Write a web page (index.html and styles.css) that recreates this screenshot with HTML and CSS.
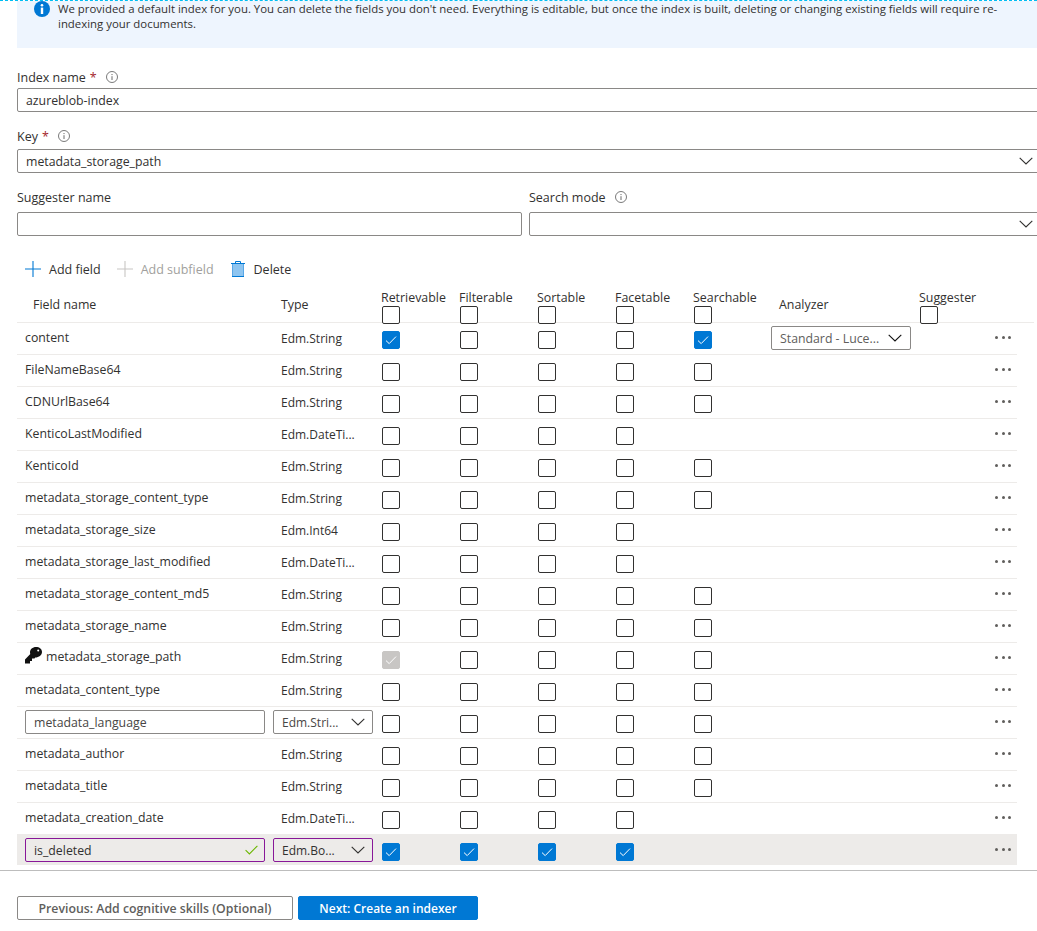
FILE: index.html
```html
<!DOCTYPE html>
<html lang="en">
<head>
<meta charset="utf-8">
<title>Customize target index</title>
<link rel="stylesheet" href="styles.css">
</head>
<body>
<svg class="defs" width="0" height="0" aria-hidden="true">
  <symbol id="chk" viewBox="0 0 18 18"><path d="M4 9.6 7.2 12.6 14 5.6" fill="none" stroke="currentColor" stroke-width="1"/></symbol>
  <symbol id="chev" viewBox="0 0 14 8"><path d="M.7.8 7 7 13.3.8" fill="none" stroke="currentColor" stroke-width="1.1"/></symbol>
  <symbol id="tip" viewBox="0 0 12 12"><circle cx="6" cy="6" r="5.5" fill="none" stroke="#6b6b6b" stroke-width=".9"/><path d="M6 5.2V9M6 3v1.1" stroke="#6b6b6b" stroke-width="1" fill="none"/></symbol>
  <symbol id="plus" viewBox="0 0 16 16"><path d="M8 0v16M0 8h16" stroke="currentColor" stroke-width="1.1" fill="none"/></symbol>
</svg>
<div class="page">
  <div class="notice">
    <svg class="notice-icon" viewBox="0 0 16 16"><circle cx="8" cy="8" r="8" fill="#0078d4"/><circle cx="8" cy="4.2" r="1.3" fill="#fff"/><path d="M6.8 6.6h2.4V13H6.8z" fill="#fff"/></svg>
    <p>We provided a default index for you. You can delete the fields you don't need. Everything is editable, but once the index is built, deleting or changing existing fields will require re-indexing your documents.</p>
  </div>

  <div class="form">
    <label class="lbl lbl-index">Index name <b>*</b><svg class="tip"><use href="#tip"/></svg></label>
    <div class="field">azureblob-index</div>
    <label class="lbl lbl-key">Key <b>*</b><svg class="tip"><use href="#tip"/></svg></label>
    <div class="field">metadata_storage_path<svg class="chev"><use href="#chev"/></svg></div>
    <div class="pair">
      <div class="pair-a">
        <label class="lbl">Suggester name</label>
        <div class="field"></div>
      </div>
      <div class="pair-b">
        <label class="lbl">Search mode<svg class="tip"><use href="#tip"/></svg></label>
        <div class="field"><svg class="chev"><use href="#chev"/></svg></div>
      </div>
    </div>
  </div>

  <div class="toolbar">
    <span class="tool"><svg class="plus blue"><use href="#plus"/></svg>Add field</span>
    <span class="tool off"><svg class="plus"><use href="#plus"/></svg>Add subfield</span>
    <span class="tool"><svg class="trash" viewBox="0 0 14 16"><path d="M2 3h10v12H2z" fill="#8ec5f0"/><path d="M1.5 3v12.5M12.5 3v12.5" fill="none" stroke="#5aa7e6" stroke-width="1"/><path d="M1 15.5h12M0 2.5h14M4.5 2.5V.5h5v2" fill="none" stroke="#0078d4" stroke-width="1"/></svg>Delete</span>
  </div>

  <div class="grid">
    <div class="head">
      <div class="h-name">Field name</div>
      <div class="h-type">Type</div>
      <div class="h-cb">Retrievable<span class="cb"></span></div>
      <div class="h-cb">Filterable<span class="cb"></span></div>
      <div class="h-cb">Sortable<span class="cb"></span></div>
      <div class="h-cb">Facetable<span class="cb"></span></div>
      <div class="h-cb">Searchable<span class="cb"></span></div>
      <div class="h-an">Analyzer</div>
      <div class="h-cb">Suggester<span class="cb"></span></div>
    </div>

    <div class="row">
      <div class="name">content</div><div class="type">Edm.String</div>
      <span class="cb on"><svg><use href="#chk"/></svg></span><span class="cb"></span><span class="cb"></span><span class="cb"></span><span class="cb on"><svg><use href="#chk"/></svg></span>
      <div class="analyzer"><span>Standard - Luce...</span><svg class="chev dark"><use href="#chev"/></svg></div><div class="blank"></div>
      <div class="more"><i></i><i></i><i></i></div>
    </div>
    <div class="row">
      <div class="name">FileNameBase64</div><div class="type">Edm.String</div>
      <span class="cb"></span><span class="cb"></span><span class="cb"></span><span class="cb"></span><span class="cb"></span>
      <div class="analyzer"></div><div class="blank"></div>
      <div class="more"><i></i><i></i><i></i></div>
    </div>
    <div class="row">
      <div class="name">CDNUrlBase64</div><div class="type">Edm.String</div>
      <span class="cb"></span><span class="cb"></span><span class="cb"></span><span class="cb"></span><span class="cb"></span>
      <div class="analyzer"></div><div class="blank"></div>
      <div class="more"><i></i><i></i><i></i></div>
    </div>
    <div class="row">
      <div class="name">KenticoLastModified</div><div class="type">Edm.DateTi...</div>
      <span class="cb"></span><span class="cb"></span><span class="cb"></span><span class="cb"></span><span class="nocb"></span>
      <div class="analyzer"></div><div class="blank"></div>
      <div class="more"><i></i><i></i><i></i></div>
    </div>
    <div class="row">
      <div class="name">KenticoId</div><div class="type">Edm.String</div>
      <span class="cb"></span><span class="cb"></span><span class="cb"></span><span class="cb"></span><span class="cb"></span>
      <div class="analyzer"></div><div class="blank"></div>
      <div class="more"><i></i><i></i><i></i></div>
    </div>
    <div class="row">
      <div class="name">metadata_storage_content_type</div><div class="type">Edm.String</div>
      <span class="cb"></span><span class="cb"></span><span class="cb"></span><span class="cb"></span><span class="cb"></span>
      <div class="analyzer"></div><div class="blank"></div>
      <div class="more"><i></i><i></i><i></i></div>
    </div>
    <div class="row">
      <div class="name">metadata_storage_size</div><div class="type">Edm.Int64</div>
      <span class="cb"></span><span class="cb"></span><span class="cb"></span><span class="cb"></span><span class="nocb"></span>
      <div class="analyzer"></div><div class="blank"></div>
      <div class="more"><i></i><i></i><i></i></div>
    </div>
    <div class="row">
      <div class="name">metadata_storage_last_modified</div><div class="type">Edm.DateTi...</div>
      <span class="cb"></span><span class="cb"></span><span class="cb"></span><span class="cb"></span><span class="nocb"></span>
      <div class="analyzer"></div><div class="blank"></div>
      <div class="more"><i></i><i></i><i></i></div>
    </div>
    <div class="row">
      <div class="name">metadata_storage_content_md5</div><div class="type">Edm.String</div>
      <span class="cb"></span><span class="cb"></span><span class="cb"></span><span class="cb"></span><span class="cb"></span>
      <div class="analyzer"></div><div class="blank"></div>
      <div class="more"><i></i><i></i><i></i></div>
    </div>
    <div class="row">
      <div class="name">metadata_storage_name</div><div class="type">Edm.String</div>
      <span class="cb"></span><span class="cb"></span><span class="cb"></span><span class="cb"></span><span class="cb"></span>
      <div class="analyzer"></div><div class="blank"></div>
      <div class="more"><i></i><i></i><i></i></div>
    </div>
    <div class="row">
      <div class="name name-key"><svg class="key" viewBox="0 0 17 17"><path d="M11 0C7.5 0 5 2.3 5 5.2c0 .7.1 1.3.3 1.9L0 12.4v4.1h5V14h2v-2.5h2.5l.7-1C14 10.5 17 8 17 5c0-3-2.5-5-6-5z" fill="#111"/><circle cx="13.2" cy="3.4" r="1" fill="#fff"/></svg>metadata_storage_path</div><div class="type">Edm.String</div>
      <span class="cb dis"><svg><use href="#chk"/></svg></span><span class="cb"></span><span class="cb"></span><span class="cb"></span><span class="cb"></span>
      <div class="analyzer"></div><div class="blank"></div>
      <div class="more"><i></i><i></i><i></i></div>
    </div>
    <div class="row">
      <div class="name">metadata_content_type</div><div class="type">Edm.String</div>
      <span class="cb"></span><span class="cb"></span><span class="cb"></span><span class="cb"></span><span class="cb"></span>
      <div class="analyzer"></div><div class="blank"></div>
      <div class="more"><i></i><i></i><i></i></div>
    </div>
    <div class="row">
      <div class="cell-in"><div class="in">metadata_language</div></div>
      <div class="cell-sel"><div class="sel">Edm.Stri...<svg class="chev"><use href="#chev"/></svg></div></div>
      <span class="cb"></span><span class="cb"></span><span class="cb"></span><span class="cb"></span><span class="cb"></span>
      <div class="analyzer"></div><div class="blank"></div>
      <div class="more"><i></i><i></i><i></i></div>
    </div>
    <div class="row">
      <div class="name">metadata_author</div><div class="type">Edm.String</div>
      <span class="cb"></span><span class="cb"></span><span class="cb"></span><span class="cb"></span><span class="cb"></span>
      <div class="analyzer"></div><div class="blank"></div>
      <div class="more"><i></i><i></i><i></i></div>
    </div>
    <div class="row">
      <div class="name">metadata_title</div><div class="type">Edm.String</div>
      <span class="cb"></span><span class="cb"></span><span class="cb"></span><span class="cb"></span><span class="cb"></span>
      <div class="analyzer"></div><div class="blank"></div>
      <div class="more"><i></i><i></i><i></i></div>
    </div>
    <div class="row">
      <div class="name">metadata_creation_date</div><div class="type">Edm.DateTi...</div>
      <span class="cb"></span><span class="cb"></span><span class="cb"></span><span class="cb"></span><span class="nocb"></span>
      <div class="analyzer"></div><div class="blank"></div>
      <div class="more"><i></i><i></i><i></i></div>
    </div>
    <div class="row row-new">
      <div class="cell-in"><div class="in new">is_deleted<svg class="ok" viewBox="0 0 13 10"><path d="M.6 5.2 4.4 9 12.4.8" fill="none" stroke="#6bb700" stroke-width="1.1"/></svg></div></div>
      <div class="cell-sel"><div class="sel new">Edm.Bo...<svg class="chev"><use href="#chev"/></svg></div></div>
      <span class="cb on"><svg><use href="#chk"/></svg></span><span class="cb on"><svg><use href="#chk"/></svg></span><span class="cb on"><svg><use href="#chk"/></svg></span><span class="cb on"><svg><use href="#chk"/></svg></span><span class="nocb"></span>
      <div class="analyzer"></div><div class="blank"></div>
      <div class="more"><i></i><i></i><i></i></div>
    </div>
  </div>

  <div class="footer">
    <button class="btn">Previous: Add cognitive skills (Optional)</button>
    <button class="btn primary">Next: Create an indexer</button>
  </div>
</div>
</body>
</html>
```
FILE: styles.css
```css
* { box-sizing: border-box; }
html, body { margin: 0; padding: 0; height: 931px; overflow: hidden; background: #fff; }
body { font-family: "Open Sans", "Noto Sans", sans-serif; font-size: 12px; color: #323130; }
.defs { position: absolute; }
.page { width: 1037px; border-top: 1px dashed #00bcf2; }

.notice { margin-left: 17px; width: 1020px; height: 47px; background: #eef5fe; display: flex; gap: 8px; padding-left: 17px; }
.notice-icon { width: 16px; height: 16px; flex: none; }
.notice p { margin: 0; font-size: 11.4px; line-height: 15px; color: #323130; width: 950px; }

.form { padding: 20px 0 0 17px; width: 1050px; }
.lbl { display: flex; align-items: center; height: 18px; font-size: 12.5px; font-weight: 500; color: #323130; }
.lbl b { color: #a4262c; font-weight: 400; margin-left: 4px; }
.tip { width: 12px; height: 12px; margin-left: 9px; }
.field { position: relative; height: 24px; border: 1px solid #8a8886; border-radius: 2px; padding-left: 8px; font-size: 12.3px; line-height: 24px; color: #323130; }
.lbl-key { margin-top: 15px; margin-bottom: 4px; }
.lbl-index { margin-bottom: 2px; }
.chev { width: 14px; height: 8px; color: #323130; }
.field .chev { position: absolute; left: 1001px; top: 7px; }
.pair { display: flex; gap: 7px; margin-top: 15px; }
.pair .lbl { margin-bottom: 6px; }
.pair-a { width: 505px; flex: none; }
.pair-b { flex: 1; }
.pair-b .chev { left: 489px; }

.toolbar { display: flex; align-items: center; height: 24px; margin-top: 21px; padding-left: 25px; font-size: 12.5px; }
.tool { display: flex; align-items: center; margin-right: 16px; color: #323130; }
.tool.off { color: #a19f9d; margin-right: 17px; }
.plus { width: 16px; height: 16px; margin-right: 8px; color: #c8c6c4; }
.plus.blue { color: #0078d4; }
.trash { width: 14px; height: 16px; margin-right: 9px; }

.grid { margin-top: 9px; }
.head { display: grid; grid-template-columns: 264px 100px 78px 78px 78px 78px 86px 140px 80px; height: 33px; margin-left: 17px; width: 1017px; border-bottom: 1px solid #edebe9; }
.head > div { font-size: 12.4px; font-weight: 500; color: #323130; line-height: 16px; }
.h-name { padding: 7px 0 0 16px; }
.h-type { padding-top: 7px; }
.h-an { padding-top: 7px; }
.h-cb { display: flex; flex-direction: column; align-items: flex-start; }
.h-cb .cb { margin: 0 0 0 1px; }

.row { display: grid; grid-template-columns: 248px 109px 78px 78px 78px 78px 77px 148px 76px 40px; height: 32px; width: 1000px; margin-left: 17px; padding-left: 8px; border-bottom: 1px solid #edebe9; align-items: start; }
.name { padding-top: 6px; font-size: 12.3px; line-height: 18px; white-space: nowrap; }
.type { padding: 7px 0 0 8px; line-height: 18px; white-space: nowrap; }
.name-key { display: flex; align-items: flex-start; padding-top: 4px; line-height: 20px; }
.key { width: 17px; height: 17px; margin: 0 4px 0 0; }

.cb { display: block; width: 18px; height: 18px; margin-top: 8px; border: 1px solid #323130; border-radius: 2px; background: #fff; }
.cb svg { display: block; width: 18px; height: 18px; margin: -1px; color: #fff; }
.cb.on { background: #0078d4; border-color: #0078d4; }
.cb.dis { background: #c8c6c4; border-color: #c8c6c4; }
.nocb { display: block; }

.analyzer { display: flex; align-items: center; }
.analyzer span + svg { margin-left: 9px; }
.row > .analyzer:has(span) { height: 24px; width: 140px; margin-top: 3px; border: 1px solid #8a8886; border-radius: 2px; padding-left: 8px; font-size: 12.3px; color: #605e5c; }
.chev.dark { color: #111; }

.more { display: flex; gap: 3.7px; height: 20px; align-items: center; padding-top: 9px; }
.more i { display: block; width: 3px; height: 3px; border-radius: 50%; background: #605e5c; }

.cell-in { padding-top: 3px; }
.cell-sel { padding-top: 3px; }
.in, .sel { position: relative; height: 24px; border: 1px solid #8a8886; border-radius: 2px; font-size: 12.3px; line-height: 23px; padding-left: 8px; color: #484644; white-space: nowrap; }
.sel { font-size: 12px; }
.in { width: 240px; }
.sel { width: 100px; }
.sel .chev { position: absolute; left: 77px; top: 7px; }
.in.new, .sel.new { border-color: #881798; color: #323130; }
.ok { position: absolute; right: 6px; top: 6px; width: 13px; height: 10px; }
.row-new { background: #edebe9; height: 30px; border-bottom: 0; }

.footer { margin-top: 5px; height: 60px; border-top: 1px solid #bdbdbd; padding: 25px 0 0 17px; display: flex; gap: 5px; }
.btn { height: 24px; font: inherit; font-size: 12.3px; font-weight: 600; border-radius: 2px; border: 1px solid #8a8886; background: #fff; color: #605e5c; padding: 0; width: 276px; }
.btn.primary { width: 180px; background: #0078d4; border-color: #0078d4; color: #fff; font-size: 12px; font-weight: 600; }
```
